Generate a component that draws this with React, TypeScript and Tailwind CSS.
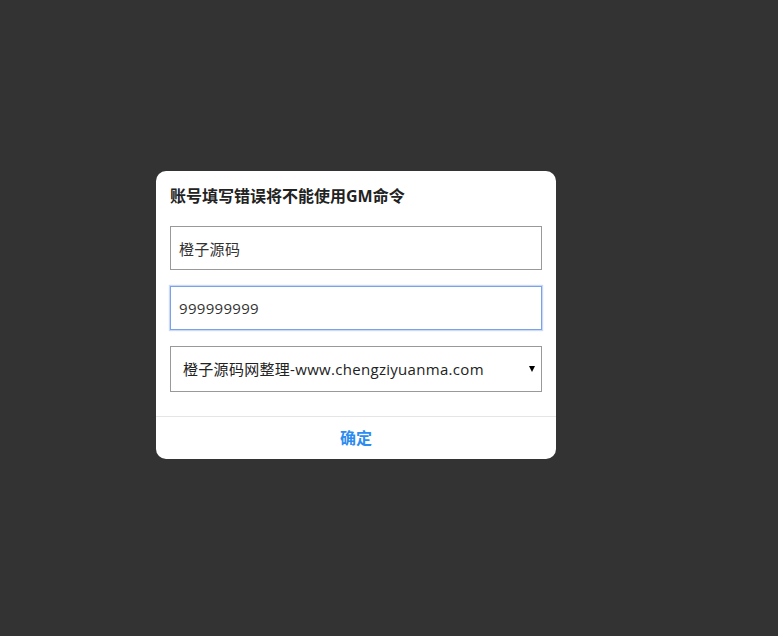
import React from 'react';

const App: React.FC = () => {
  const [name, setName] = React.useState('橙子源码');
  const [account, setAccount] = React.useState('999999999');
  const [server, setServer] = React.useState('1');

  return (
    <div
      className="min-h-screen w-full bg-[#333333] flex items-center justify-center pr-[66px] pb-[6px]"
      style={{ fontFamily: '"Open Sans", "Noto Sans CJK SC", sans-serif' }}
    >
      <div className="w-[400px] bg-white rounded-[10px] flex flex-col overflow-hidden">
        <div className="px-[14px] pt-[14px] pb-[24px] flex flex-col">
          <h3 className="text-[16px] leading-[22px] font-bold text-[#222]">账号填写错误将不能使用GM命令</h3>

          <div className="mt-[19px] flex flex-col gap-[16px]">
            <input
              value={name}
              onChange={(e) => setName(e.target.value)}
              className="h-[44px] w-full border border-[#999] px-[8px] text-[15px] tracking-[0.3px] text-[#333] outline-none"
            />
            <input
              value={account}
              onChange={(e) => setAccount(e.target.value)}
              className="h-[44px] w-full border border-[#7aa2e6] shadow-[0_0_1px_1px_rgba(110,150,230,0.35)] px-[8px] text-[15px] tracking-[0.3px] text-[#333] outline-none"
            />
            <div className="relative">
              <select
                value={server}
                onChange={(e) => setServer(e.target.value)}
                className="h-[46px] w-full appearance-none border border-[#999] bg-white pl-[12px] pr-[24px] text-[15px] tracking-[0.3px] text-[#222] outline-none"
              >
                <option value="1">橙子源码网整理-www.chengziyuanma.com</option>
              </select>
              {/* 下拉箭头 */}
              <span className="pointer-events-none absolute right-[7px] top-1/2 -translate-y-1/2 w-0 h-0 border-l-[3px] border-r-[3px] border-t-[6px] border-l-transparent border-r-transparent border-t-black"></span>
            </div>
          </div>
        </div>

        <button className="h-[43px] border-t border-[#e5e5e5] text-[16px] font-bold text-[#2d8cf0] flex items-center justify-center">
          确定
        </button>
      </div>
    </div>
  );
};

export default App;
